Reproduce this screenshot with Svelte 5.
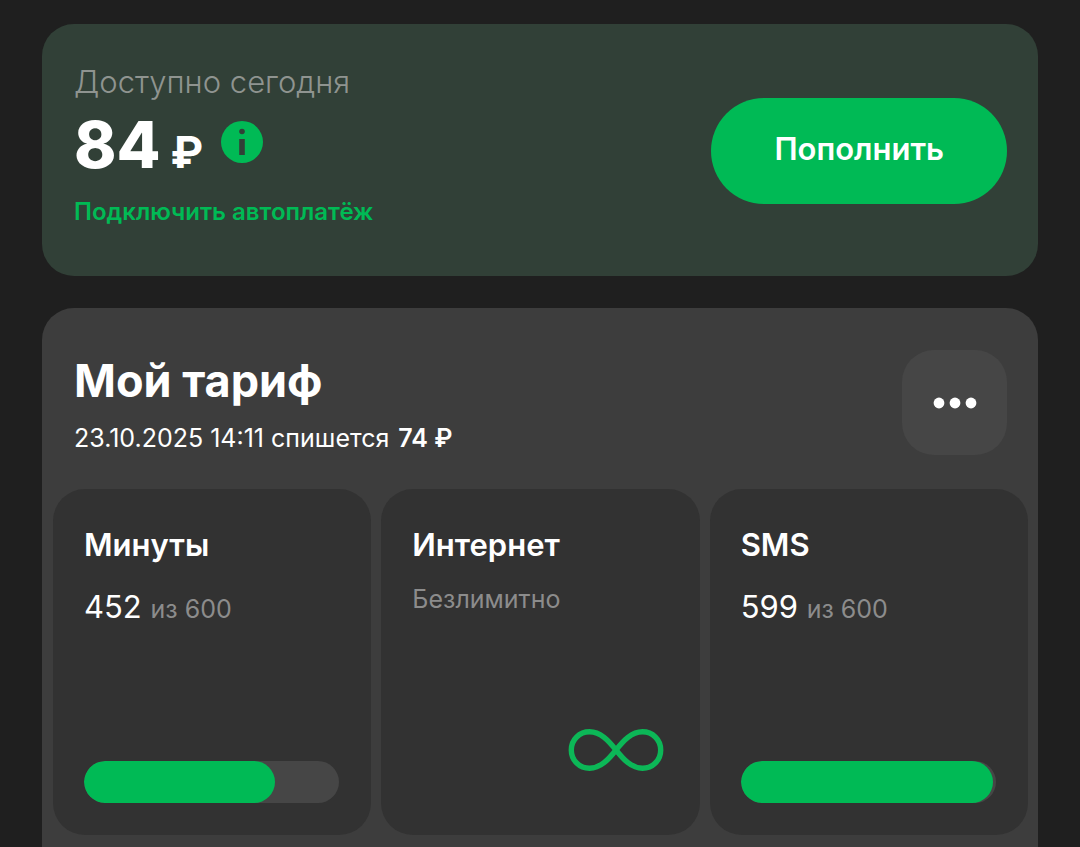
<script>
  const packages = [
    { title: 'Минуты', left: 452, total: 600 },
    { title: 'Интернет', unlimited: true },
    { title: 'SMS', left: 599, total: 600 }
  ];

  const percent = (item) => Math.floor((item.left / item.total) * 100);
</script>

<main class="page">
  <section class="balance">
    <div class="balance-info">
      <p class="caption">Доступно сегодня</p>
      <div class="amount-row">
        <p class="amount">84</p>
        <span class="currency">₽</span>
        <button class="info" type="button" aria-label="Подробнее о балансе">
          <svg viewBox="0 0 42 42" aria-hidden="true">
            <circle cx="21" cy="21" r="21" fill="#00ba55" />
            <circle cx="21" cy="10.5" r="2.8" fill="#314037" />
            <rect x="18.2" y="18" width="5.6" height="16" fill="#314037" />
          </svg>
        </button>
      </div>
      <a class="autopay" href="#autopay">Подключить автоплатёж</a>
    </div>
    <button class="topup" type="button">Пополнить</button>
  </section>

  <section class="tariff">
    <header class="tariff-head">
      <div>
        <h1>Мой тариф</h1>
        <p class="charge">23.10.2025 14:11 спишется <strong>74 ₽</strong></p>
      </div>
      <button class="more" type="button" aria-label="Ещё">
        <svg viewBox="0 0 44 12" aria-hidden="true">
          <circle cx="6" cy="6" r="5.4" />
          <circle cx="22" cy="6" r="5.4" />
          <circle cx="38" cy="6" r="5.4" />
        </svg>
      </button>
    </header>

    <div class="tiles">
      {#each packages as item}
        <article class="tile">
          <h2>{item.title}</h2>
          {#if item.unlimited}
            <p class="unlimited">Безлимитно</p>
            <svg class="infinity" viewBox="0 0 96 42" aria-hidden="true">
              <path
                d="M48 21C40.5 11.500 32.500 2.800 21.500 2.800C11.500 2.800 3.300 10.500 3.300 21S11.500 39.200 21.500 39.200C32.500 39.200 40.500 30.500 48 21S63.500 2.800 74.500 2.800C84.500 2.800 92.700 10.500 92.700 21S84.500 39.200 74.500 39.200C63.500 39.200 55.500 30.500 48 21Z"
              />
            </svg>
          {:else}
            <p class="usage">{item.left} <span>из {item.total}</span></p>
            <div
              class="bar"
              role="progressbar"
              aria-label={item.title}
              aria-valuenow={item.left}
              aria-valuemin="0"
              aria-valuemax={item.total}
            >
              <div class="fill" style="width: {percent(item)}%"></div>
            </div>
          {/if}
        </article>
      {/each}
    </div>
  </section>
</main>

<style>
  :global(body) {
    margin: 0;
    background: #1f1f1f;
  }

  .page {
    box-sizing: border-box;
    display: flex;
    flex-direction: column;
    gap: 32px;
    min-height: 100vh;
    padding: 24px 42px 0;
    color: #fff;
    font-family: Inter, "Liberation Sans", sans-serif;
  }

  h1,
  h2,
  p {
    margin: 0;
  }

  button {
    border: 0;
    padding: 0;
    color: inherit;
    font: inherit;
    cursor: pointer;
  }

  svg {
    display: block;
  }

  .balance {
    display: flex;
    align-items: center;
    justify-content: space-between;
    padding: 38px 31px 36px 32px;
    border-radius: 32px;
    background: #314037;
  }

  .caption {
    color: #8f9490;
    font-size: 31px;
    line-height: 40px;
    font-weight: 300;
  }

  .amount-row {
    display: flex;
    align-items: baseline;
    height: 92px;
    line-height: 86px;
  }

  .amount {
    font-size: 64px;
    font-weight: 800;
  }

  .currency {
    margin-left: 10px;
    font-size: 44px;
    line-height: 48px;
    font-weight: 700;
  }

  .info {
    align-self: center;
    width: 42px;
    height: 42px;
    margin: 0 0 12px 18px;
    border-radius: 50%;
    background: none;
  }

  .autopay {
    display: block;
    margin-bottom: 10px;
    color: #00ba55;
    font-size: 24px;
    line-height: 36px;
    font-weight: 600;
    text-decoration: none;
  }

  .topup {
    height: 106px;
    padding: 0 63px 6px;
    border-radius: 53px;
    background: #00ba55;
    font-size: 31px;
    font-weight: 600;
  }

  .tariff {
    flex: 1;
    padding: 42px 10px 12px 11px;
    border-radius: 32px 32px 0 0;
    background: #3d3d3d;
  }

  .tariff-head {
    display: flex;
    align-items: flex-start;
    justify-content: space-between;
    padding: 0 21px 25px;
  }

  h1 {
    font-size: 45px;
    line-height: 62px;
    font-weight: 700;
  }

  .charge {
    font-size: 25px;
    line-height: 52px;
    font-weight: 400;
  }

  .charge strong {
    margin-left: 2px;
    font-weight: 600;
  }

  .more {
    display: grid;
    place-items: center;
    width: 105px;
    height: 105px;
    border-radius: 32px;
    background: #464646;
  }

  .more svg {
    width: 44px;
    height: 12px;
    fill: #fff;
  }

  .tiles {
    display: grid;
    grid-template-columns: repeat(3, 1fr);
    gap: 10px;
  }

  .tile {
    box-sizing: border-box;
    display: flex;
    flex-direction: column;
    min-height: 346px;
    padding: 36px 32px 32px 31px;
    border-radius: 32px;
    background: #323232;
  }

  h2 {
    font-size: 31px;
    line-height: 40px;
    font-weight: 600;
  }

  .usage {
    margin-top: 22px;
    font-size: 31px;
    line-height: 40px;
    font-weight: 400;
  }

  .usage span,
  .unlimited {
    color: #8c8c8c;
    font-size: 25px;
    font-weight: 400;
  }

  .unlimited {
    margin-top: 14px;
    line-height: 40px;
  }

  .infinity {
    width: 96px;
    height: 42px;
    margin: auto 4px 32px auto;
    fill: none;
    stroke: #0cb757;
    stroke-width: 5.4;
  }

  .bar {
    height: 42px;
    margin-top: auto;
    border-radius: 21px;
    background: #464646;
    overflow: hidden;
  }

  .fill {
    height: 100%;
    border-radius: 21px;
    background: #00ba55;
  }
</style>
